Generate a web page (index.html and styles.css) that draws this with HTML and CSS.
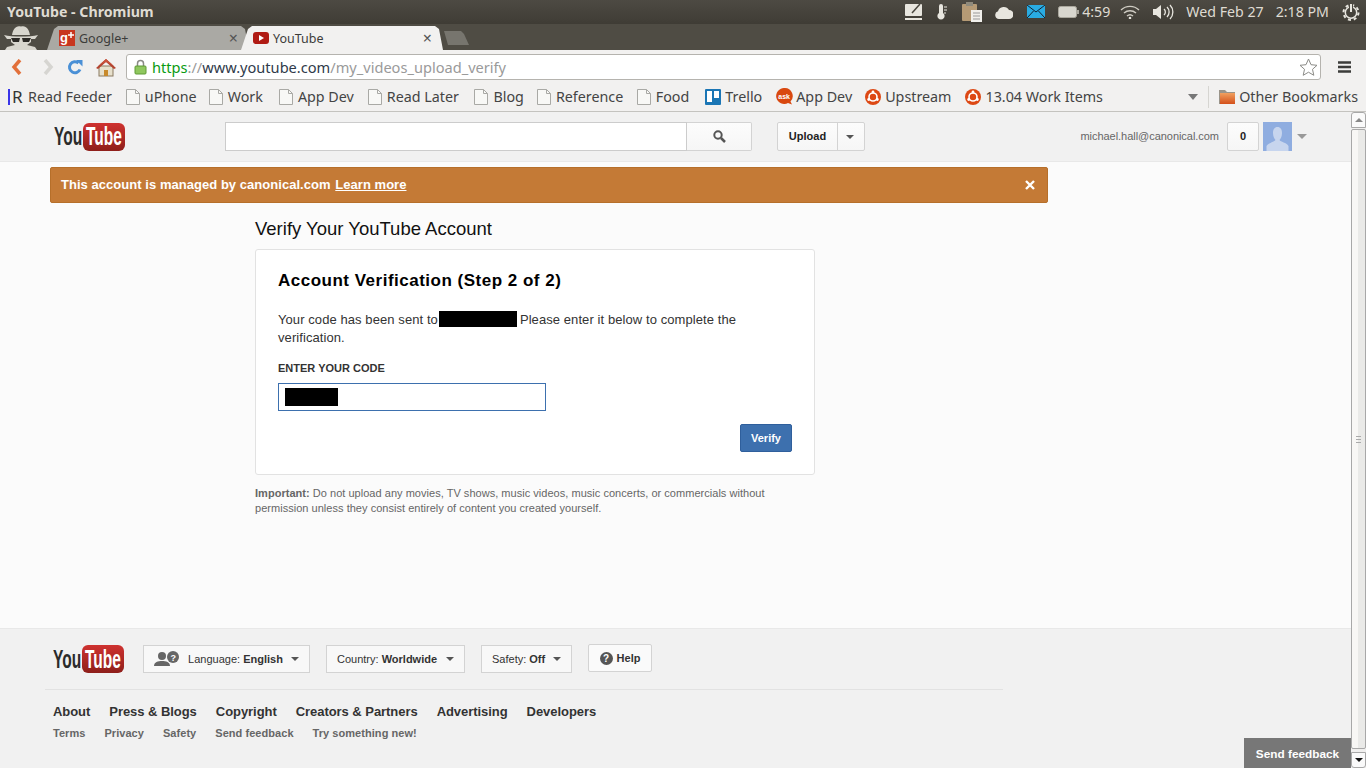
FILE: index.html
```html
<!DOCTYPE html>
<html lang="en">
<head>
    <meta charset="UTF-8">
    <title>YouTube - Chromium</title>
    <link rel="stylesheet" href="styles.css">
</head>
<body>
    <div class="menubar">
        <div class="window-title">YouTube - Chromium</div>
        <div class="indicators">
            <svg class="ind ind-note" width="18" height="18" viewBox="0 0 18 18"><rect x="0" y="1" width="17" height="12" rx="1" fill="#e8e6df"/><rect x="0" y="15" width="17" height="2" fill="#e8e6df"/><path d="M7 10 L15 1" stroke="#4a473f" stroke-width="1.5"/></svg>
            <svg class="ind ind-thermo" width="10" height="18" viewBox="0 0 10 18"><path d="M2 3a2 2 0 0 1 4 0v7a3.6 3.6 0 1 1-4 0z" fill="#e8e6df"/><path d="M7 4h3M7 7h3M7 10h2" stroke="#e8e6df" stroke-width="1"/></svg>
            <svg class="ind ind-clip" width="20" height="22" viewBox="0 0 20 22"><rect x="0" y="3" width="15" height="17" rx="1" fill="#b59a75"/><rect x="4" y="1" width="7" height="4" fill="#8f8a7c"/><rect x="9" y="9" width="11" height="12" fill="#f1f0ec"/><path d="M11 12h7M11 15h7M11 18h7" stroke="#999" stroke-width="1"/></svg>
            <svg class="ind ind-cloud" width="18" height="14" viewBox="0 0 18 14"><path d="M4 14a4 4 0 0 1-1-7.8A6 6 0 0 1 14 5a4.5 4.5 0 0 1 0 9z" fill="#e8e6df"/></svg>
            <svg class="ind ind-mail" width="18" height="13" viewBox="0 0 18 13"><rect width="18" height="13" fill="#29abe2"/><path d="M0 0l9 7 9-7M0 13l6.500-7M18 13l-6.500-7" stroke="#123" stroke-width="1" fill="none"/></svg>
            <svg class="ind ind-batt" width="21" height="12" viewBox="0 0 21 12"><rect x=".5" y=".5" width="18" height="11" rx="2" fill="#d8d6ce" stroke="#aaa79d"/><rect x="19" y="4" width="2" height="4" fill="#aaa79d"/></svg>
            <span class="ind-text ind-time">4:59</span>
            <svg class="ind ind-wifi" width="20" height="14" viewBox="0 0 20 14"><path d="M1 5a13 13 0 0 1 18 0M4 8a9 9 0 0 1 12 0M7 11a4.500 4.500 0 0 1 6 0" stroke="#cfccc3" stroke-width="1.400" fill="none"/><circle cx="10" cy="13" r="1.300" fill="#e8e6df"/></svg>
            <svg class="ind ind-vol" width="21" height="16" viewBox="0 0 21 16"><path d="M0 5h3l5-4v14l-5-4H0z" fill="#e8e6df"/><path d="M11 5a4 4 0 0 1 0 6M14 3a7 7 0 0 1 0 10M17 1a10 10 0 0 1 0 14" stroke="#e8e6df" stroke-width="1.300" fill="none"/></svg>
            <span class="ind-text ind-date">Wed Feb 27</span>
            <span class="ind-text ind-clock">2:18 PM</span>
            <svg class="ind ind-gear" width="18" height="18" viewBox="0 0 18 18"><circle cx="9" cy="9.500" r="7.500" fill="none" stroke="#e8e6df" stroke-width="2" stroke-dasharray="3 2.900"/><circle cx="9" cy="9.500" r="5.700" fill="none" stroke="#e8e6df" stroke-width="1.500"/><path d="M9 1v8" stroke="#4a473f" stroke-width="4"/><path d="M9 1v8" stroke="#e8e6df" stroke-width="2"/></svg>
        </div>
    </div>

    <div class="tabstrip">
        <svg class="incognito" width="36" height="25" viewBox="0 0 36 25"><path d="M9 10C10 4 13 0 18 1.500 23 0 26 4 27 10z" fill="#d8d6ce"/><path d="M1 10c8 2 26 2 34 0l-3 4H4z" fill="#d8d6ce"/><path d="M8 14h20v3l-4 3 8 2 2 3H2l2-3 8-2-4-3z" fill="#d8d6ce"/><path d="M8 13h9l-1 4h-6zM19 13h9l-2 4h-6z" fill="#2c2a26"/></svg>
        <div class="tab tab-off">
            <svg class="favicon" width="16" height="16" viewBox="0 0 16 16"><rect width="16" height="16" fill="#c8361f"/><text x="1" y="12" class="gplus-text">g</text><path d="M9 5h6M12 2v6" stroke="#fff" stroke-width="1.500"/></svg>
            <span class="tab-label">Google+</span>
            <span class="tab-close">×</span>
        </div>
        <div class="tab tab-on">
            <svg class="favicon" width="16" height="12" viewBox="0 0 16 12"><rect width="16" height="12" rx="3" fill="#b01b14"/><path d="M6 3l5 3-5 3z" fill="#fff"/></svg>
            <span class="tab-label">YouTube</span>
            <span class="tab-close">×</span>
        </div>
        <div class="tab-new"></div>
    </div>

    <div class="toolbar">
        <svg class="tool tool-back" width="12" height="16" viewBox="0 0 12 16"><path d="M9 1L3 8l6 7" stroke="#e2703a" stroke-width="3.500" fill="none"/></svg>
        <svg class="tool tool-fwd" width="12" height="16" viewBox="0 0 12 16"><path d="M3 1l6 7-6 7" stroke="#d6d5d1" stroke-width="3.500" fill="none"/></svg>
        <svg class="tool tool-reload" width="16" height="16" viewBox="0 0 16 16"><path d="M13 10.500A5.500 5.500 0 1 1 11.500 4" stroke="#4a90d6" stroke-width="3" fill="none"/><path d="M9 1h6.500v6.500z" fill="#4a90d6"/></svg>
        <svg class="tool tool-home" width="20" height="19" viewBox="0 0 20 19"><rect x="3" y="8" width="14" height="10" fill="#e7e0cc" stroke="#8a7a60"/><path d="M0 10L10 1l10 9-2 1-8-7-8 7z" fill="#b4432f"/><path d="M10 1L3 7l7-3 7 3z" fill="#c9523c"/><rect x="8" y="12" width="4" height="6" fill="#c88a2c"/></svg>
        <div class="omnibox">
            <svg class="lock" width="13" height="16" viewBox="0 0 13 16"><path d="M3.500 7V4.500a3 3 0 0 1 6 0V7" stroke="#8a8a86" stroke-width="1.500" fill="none"/><rect x="1" y="7" width="11" height="8" rx="1" fill="#8fc75e" stroke="#5f9a35"/></svg>
            <div class="url"><span class="url-scheme">https</span><span class="url-sep">://</span><span class="url-host">www.youtube.com</span><span class="url-path">/my_videos_upload_verify</span></div>
            <svg class="star" width="19" height="18" viewBox="0 0 19 18"><path d="M9.500 1l2.500 5.700 6 .6-4.500 4 1.300 6-5.300-3.100-5.300 3.100 1.300-6-4.500-4 6-.6z" fill="#fff" stroke="#8b8b87"/></svg>
        </div>
        <svg class="tool tool-menu" width="13" height="12" viewBox="0 0 13 12"><path d="M0 1.500h13M0 6h13M0 10.500h13" stroke="#3c3c3a" stroke-width="2.400"/></svg>
    </div>

    <div class="bookmarks">
        <div class="bm bm-feeder"><span class="bm-bar"></span><span class="bm-r">R</span><span>Read Feeder</span></div>
        <div class="bm bm-uphone"><svg class="bm-page" width="14" height="16" viewBox="0 0 14 16"><path d="M.5.500h9l4 4v11H.5z" fill="#f8f8f6" stroke="#a9a9a5"/><path d="M9.500.500v4h4" fill="none" stroke="#a9a9a5"/></svg><span>uPhone</span></div>
        <div class="bm bm-work"><svg class="bm-page" width="14" height="16" viewBox="0 0 14 16"><path d="M.5.500h9l4 4v11H.5z" fill="#f8f8f6" stroke="#a9a9a5"/><path d="M9.500.500v4h4" fill="none" stroke="#a9a9a5"/></svg><span>Work</span></div>
        <div class="bm bm-app"><svg class="bm-page" width="14" height="16" viewBox="0 0 14 16"><path d="M.5.500h9l4 4v11H.5z" fill="#f8f8f6" stroke="#a9a9a5"/><path d="M9.500.500v4h4" fill="none" stroke="#a9a9a5"/></svg><span>App Dev</span></div>
        <div class="bm bm-later"><svg class="bm-page" width="14" height="16" viewBox="0 0 14 16"><path d="M.5.500h9l4 4v11H.5z" fill="#f8f8f6" stroke="#a9a9a5"/><path d="M9.500.500v4h4" fill="none" stroke="#a9a9a5"/></svg><span>Read Later</span></div>
        <div class="bm bm-blog"><svg class="bm-page" width="14" height="16" viewBox="0 0 14 16"><path d="M.5.500h9l4 4v11H.5z" fill="#f8f8f6" stroke="#a9a9a5"/><path d="M9.500.500v4h4" fill="none" stroke="#a9a9a5"/></svg><span>Blog</span></div>
        <div class="bm bm-ref"><svg class="bm-page" width="14" height="16" viewBox="0 0 14 16"><path d="M.5.500h9l4 4v11H.5z" fill="#f8f8f6" stroke="#a9a9a5"/><path d="M9.500.500v4h4" fill="none" stroke="#a9a9a5"/></svg><span>Reference</span></div>
        <div class="bm bm-food"><svg class="bm-page" width="14" height="16" viewBox="0 0 14 16"><path d="M.5.500h9l4 4v11H.5z" fill="#f8f8f6" stroke="#a9a9a5"/><path d="M9.500.500v4h4" fill="none" stroke="#a9a9a5"/></svg><span>Food</span></div>
        <div class="bm bm-trello"><svg class="bm-icon" width="16" height="16" viewBox="0 0 16 16"><rect width="16" height="16" rx="1" fill="#1b76b5"/><rect x="2" y="2" width="5" height="11" fill="#fff"/><rect x="9" y="2" width="5" height="7" fill="#fff"/></svg><span>Trello</span></div>
        <div class="bm bm-ask"><svg class="bm-icon bm-icon-ask" width="17" height="17" viewBox="0 0 17 17"><path d="M8.500 0a8 8 0 0 1 6 13.500l1.500 3-4-1.500A8 8 0 1 1 8.500 0z" fill="#d9480f"/><text x="2.300" y="10.500" class="ask-text">ask</text></svg><span>App Dev</span></div>
        <div class="bm bm-up"><svg class="bm-icon" width="16" height="16" viewBox="0 0 16 16"><circle cx="8" cy="8" r="8" fill="#dd4814"/><circle cx="8" cy="8" r="4" fill="none" stroke="#fff" stroke-width="1.600"/><circle cx="8" cy="3" r="1.400" fill="#fff"/><circle cx="3.700" cy="10.500" r="1.400" fill="#fff"/><circle cx="12.300" cy="10.500" r="1.400" fill="#fff"/></svg><span>Upstream</span></div>
        <div class="bm bm-items"><svg class="bm-icon" width="16" height="16" viewBox="0 0 16 16"><circle cx="8" cy="8" r="8" fill="#dd4814"/><circle cx="8" cy="8" r="4" fill="none" stroke="#fff" stroke-width="1.600"/><circle cx="8" cy="3" r="1.400" fill="#fff"/><circle cx="3.700" cy="10.500" r="1.400" fill="#fff"/><circle cx="12.300" cy="10.500" r="1.400" fill="#fff"/></svg><span>13.04 Work Items</span></div>
        <div class="bm-more"></div>
        <div class="bm-divider"></div>
        <div class="bm bm-other"><svg class="bm-icon" width="16" height="15" viewBox="0 0 16 15"><defs><linearGradient id="folder-fill" x1="0" y1="0" x2="0" y2="1"><stop offset="0" stop-color="#f0a060"/><stop offset="1" stop-color="#d4501a"/></linearGradient></defs><path d="M0 1h6l2 2h8v12H0z" fill="#9a948a"/><rect x="1" y="4" width="15" height="11" fill="url(#folder-fill)"/></svg><span>Other Bookmarks</span></div>
    </div>

    <div class="viewport">
        <div class="page">
            <header class="yt-header">
                <div class="yt-logo">
                    <span class="yt-you">You</span><span class="yt-tube"><span class="yt-tube-text">Tube</span></span>
                </div>
                <div class="search">
                    <div class="search-input"></div>
                    <div class="search-btn">
                        <svg width="13" height="13" viewBox="0 0 13 13"><circle cx="5" cy="5" r="3.700" fill="none" stroke="#555" stroke-width="2"/><path d="M8 8l4 4" stroke="#555" stroke-width="2.500"/></svg>
                    </div>
                </div>
                <div class="upload">
                    <div class="upload-main">Upload</div>
                    <div class="upload-arrow"><span class="caret"></span></div>
                </div>
                <div class="account">
                    <span class="email">michael.hall@canonical.com</span>
                    <span class="notif">0</span>
                    <svg class="avatar" width="29" height="29" viewBox="0 0 29 29"><rect width="29" height="29" fill="#8fade0"/><path d="M14.500 5c3 0 4.500 2.500 4.500 6s-1.500 6-2.500 7c1 2 7 2.500 9 6v5H3.500v-5c2-3.500 8-4 9-6-1-1-2.500-3.500-2.500-7s1.500-6 4.500-6z" fill="#c7d5ee"/></svg>
                    <span class="caret caret-grey"></span>
                </div>
            </header>

            <main class="main">
                <div class="banner">
                    <div class="banner-text">This account is managed by canonical.com <a class="banner-link">Learn more</a></div>
                    <svg class="banner-close" width="10" height="10" viewBox="0 0 10 10"><path d="M1 1l8 8M9 1l-8 8" stroke="#fff" stroke-width="2.400"/></svg>
                </div>
                <section class="verify">
                    <h1 class="verify-title">Verify Your YouTube Account</h1>
                    <div class="card">
                        <h2 class="card-title">Account Verification (Step 2 of 2)</h2>
                        <p class="card-text">Your code has been sent to<span class="redact redact-phone"></span>Please enter it below to complete the verification.</p>
                        <div class="code-label">ENTER YOUR CODE</div>
                        <div class="code-input"><span class="redact redact-code"></span></div>
                        <div class="card-actions"><button class="btn-verify">Verify</button></div>
                    </div>
                    <p class="important"><b>Important:</b> Do not upload any movies, TV shows, music videos, music concerts, or commercials without permission unless they consist entirely of content you created yourself.</p>
                </section>
            </main>

            <footer class="yt-footer">
                <div class="foot-top">
                    <div class="yt-logo">
                        <span class="yt-you">You</span><span class="yt-tube"><span class="yt-tube-text">Tube</span></span>
                    </div>
                    <div class="picker picker-lang">
                        <svg class="lang-icon" width="26" height="16" viewBox="0 0 26 16"><circle cx="8" cy="5" r="4" fill="#666"/><path d="M0 15c0-4 4-5 8-5s8 1 8 5z" fill="#666"/><circle cx="19" cy="6" r="6" fill="#666"/><text x="16.500" y="9.500" class="lang-q">?</text></svg>
                        <span>Language: <b>English</b></span><span class="caret"></span>
                    </div>
                    <div class="picker picker-country"><span>Country: <b>Worldwide</b></span><span class="caret"></span></div>
                    <div class="picker picker-safety"><span>Safety: <b>Off</b></span><span class="caret"></span></div>
                    <div class="help-btn">
                        <span class="help-q">?</span><span>Help</span>
                    </div>
                </div>
                <div class="foot-links">
                    <a>About</a><a>Press &amp; Blogs</a><a>Copyright</a><a>Creators &amp; Partners</a><a>Advertising</a><a>Developers</a>
                </div>
                <div class="foot-sub">
                    <a>Terms</a><a>Privacy</a><a>Safety</a><a>Send feedback</a><a>Try something new!</a>
                </div>
            </footer>
            <div class="send-feedback">Send feedback</div>
        </div>
        <div class="scrollbar">
            <div class="sb-btn"><span class="sb-up"></span></div>
            <div class="sb-thumb"><span class="sb-grip"></span></div>
            <div class="sb-btn sb-btn-down"><span class="sb-down"></span></div>
        </div>
    </div>
</body>
</html>
```

FILE: styles.css
```css
* {
    box-sizing: border-box;
}
html, body {
    margin: 0;
    height: 768px;
    overflow: hidden;
}
body {
    font-family: "Liberation Sans", Arial, sans-serif;
    display: flex;
    flex-direction: column;
    background: #f2f1f0;
}

/* desktop panel */
.menubar {
    height: 24px;
    flex: none;
    display: flex;
    align-items: center;
    justify-content: space-between;
    padding-bottom: 1px;
    background: linear-gradient(#4d4a43, #3f3c35);
    font-family: "Noto Sans", sans-serif;
    color: #dfdbd2;
}
.window-title {
    margin-left: 7px;
    font-size: 14.200px;
    font-weight: 700;
}
.indicators {
    display: flex;
    align-items: center;
    padding-right: 6px;
}
.ind {
    flex: none;
}
.ind-text {
    font-size: 14.200px;
}
.ind-thermo { margin-left: 14px; }
.ind-clip { margin-left: 15px; }
.ind-cloud { margin-left: 13px; }
.ind-mail { margin-left: 14px; }
.ind-batt { margin-left: 13px; }
.ind-time { margin-left: 3px; }
.ind-wifi { margin-left: 10px; }
.ind-vol { margin-left: 13px; }
.ind-date { margin-left: 12px; }
.ind-clock { margin-left: 12px; }
.ind-gear { margin-left: 13px; }

/* browser tabs */
.tabstrip {
    height: 26px;
    flex: none;
    display: flex;
    align-items: flex-end;
    background: #4f4c44;
    padding-left: 3px;
}
.incognito {
    flex: none;
}
.tab {
    height: 24px;
    width: 208px;
    flex: none;
    display: flex;
    align-items: center;
    padding: 0 14px 0 15px;
    font-family: "Noto Sans", sans-serif;
    font-size: 12.500px;
    color: #3c3c3a;
    clip-path: polygon(0 100%, 3px 100%, 10px 3px, 14px 0, 197px 0, 201px 3px, 205px 100%, 208px 100%);
}
.tab-off {
    margin-left: 5px;
    background: #aaa9a4;
}
.tab-on {
    margin-left: -14px;
    background: #f2f1f0;
}
.favicon {
    flex: none;
    margin-right: 4px;
}
.gplus-text {
    font-family: "Liberation Sans", sans-serif;
    font-size: 13px;
    font-weight: 700;
    fill: #fff;
}
.tab-label {
    flex: 1;
}
.tab-close {
    font-size: 16px;
    color: #555;
}
.tab-new {
    width: 26px;
    height: 14px;
    margin-left: -3px;
    margin-bottom: 5px;
    background: #77756e;
    clip-path: polygon(1px 0, 18px 0, 21px 3px, 26px 100%, 5px 100%);
}

/* toolbar */
.toolbar {
    height: 34px;
    flex: none;
    display: flex;
    align-items: center;
    background: #f2f1f0;
}
.tool {
    flex: none;
}
.tool-back { margin-left: 11px; }
.tool-fwd { margin-left: 19px; }
.tool-reload { margin-left: 13px; }
.tool-home { margin-left: 13px; }
.omnibox {
    width: 1195px;
    height: 26px;
    margin-left: 10px;
    display: flex;
    align-items: center;
    padding: 0 2px 0 7px;
    background: #fff;
    border: 1px solid #b5b3ae;
    border-radius: 3px;
}
.lock {
    flex: none;
}
.url {
    flex: 1;
    margin-left: 5px;
    font-family: "Noto Sans", sans-serif;
    font-size: 14.600px;
}
.url-scheme { color: #0a9b12; }
.url-sep { color: #9a9a9a; }
.url-host { color: #2f3a4a; }
.url-path { color: #9a9a9a; }
.tool-menu { margin-left: 17px; }

/* bookmarks */
.bookmarks {
    height: 28px;
    flex: none;
    display: flex;
    align-items: center;
    background: #f2f1f0;
    border-bottom: 1px solid #c4c3bf;
    font-family: "Noto Sans", sans-serif;
    font-size: 14.300px;
    color: #444;
    padding: 0 0 2px 8px;
}
.bm {
    display: flex;
    align-items: center;
    flex: none;
}
.bm-bar {
    width: 2px;
    height: 16px;
    background: #3a35e8;
    margin-right: 2px;
}
.bm-r {
    width: 16px;
    font-size: 17px;
    color: #333;
}
.bm-page {
    flex: none;
    margin-right: 5px;
}
.bm-icon {
    flex: none;
    margin-right: 4px;
}
.bm-icon-ask {
    margin-right: 3px;
}
.ask-text {
    font-family: "Liberation Sans", sans-serif;
    font-size: 7px;
    font-weight: 700;
    fill: #fff;
}
.bm-uphone { margin-left: 14px; }
.bm-work { margin-left: 12px; }
.bm-app { margin-left: 16px; }
.bm-later { margin-left: 14px; }
.bm-blog { margin-left: 15.500px; }
.bm-ref { margin-left: 13px; }
.bm-food { margin-left: 13.500px; }
.bm-trello { margin-left: 16px; }
.bm-ask { margin-left: 14px; }
.bm-up { margin-left: 13px; }
.bm-items { margin-left: 14px; }
.bm-more {
    margin-left: auto;
    width: 0;
    height: 0;
    border: 5px solid transparent;
    border-top: 6px solid #777;
    border-bottom: 0;
}
.bm-divider {
    width: 1px;
    height: 22px;
    margin: 0 10px 0 10px;
    background: #d6d5d1;
}
.bm-other {
    margin-right: 8px;
}

/* page + scrollbar */
.viewport {
    flex: 1;
    display: flex;
    min-height: 0;
}
.page {
    flex: 1;
    position: relative;
    display: flex;
    flex-direction: column;
    background: #fbfbfb;
    overflow: hidden;
}
.scrollbar {
    width: 15px;
    flex: none;
    display: flex;
    flex-direction: column;
    background: #f0efee;
}
.sb-btn {
    height: 16px;
    flex: none;
    display: flex;
    align-items: center;
    justify-content: center;
    background: #fafafa;
    border: 1px solid #a8a8a8;
    border-radius: 3px 3px 0 0;
}
.sb-btn-down {
    border-radius: 0 0 3px 3px;
}
.sb-up {
    border: 4px solid transparent;
    border-top: 0;
    border-bottom: 4px solid #888;
}
.sb-down {
    border: 4px solid transparent;
    border-bottom: 0;
    border-top: 4px solid #111;
}
.sb-thumb {
    flex: 1;
    margin: 1px 0 3px;
    display: flex;
    align-items: center;
    justify-content: center;
    background: linear-gradient(90deg, #f8f7f5 50%, #eaeae8 50%);
    border: 1px solid #a8a8a8;
    border-radius: 2px;
}
.sb-grip {
    width: 5px;
    height: 7px;
    border-top: 1px solid #aaa;
    border-bottom: 1px solid #aaa;
    background: linear-gradient(#aaa, #aaa) center / 100% 1px no-repeat;
}

/* youtube header */
.yt-header {
    height: 50px;
    flex: none;
    display: flex;
    align-items: center;
    padding-left: 54px;
    padding-right: 44px;
    background: #f1f1f1;
    border-bottom: 1px solid #e8e8e8;
}
.yt-logo {
    width: 71px;
    height: 30px;
    flex: none;
    display: flex;
    align-items: center;
}
.yt-you {
    width: 28px;
    font-size: 25px;
    font-weight: 700;
    color: #2b2b2b;
    transform: scaleX(0.62);
    transform-origin: left center;
    white-space: nowrap;
}
.yt-tube {
    width: 42px;
    height: 28px;
    margin-left: 1px;
    display: flex;
    align-items: center;
    justify-content: center;
    background: linear-gradient(#cf3230, #8e1f1b);
    border-radius: 6px;
}
.yt-tube-text {
    font-size: 25px;
    font-weight: 700;
    color: #fff;
    transform: scaleX(0.62);
    white-space: nowrap;
}
.search {
    width: 527px;
    height: 29px;
    margin-left: 100px;
    flex: none;
    display: flex;
}
.search-input {
    flex: 1;
    background: #fff;
    border: 1px solid #ccc;
}
.search-btn {
    width: 65px;
    display: flex;
    align-items: center;
    justify-content: center;
    background: linear-gradient(#fcfcfc, #f6f6f6);
    border: 1px solid #d3d3d3;
    border-left: 0;
    border-radius: 0 2px 2px 0;
}
.upload {
    width: 88px;
    height: 29px;
    margin-left: 25px;
    flex: none;
    display: flex;
    background: linear-gradient(#fcfcfc, #f6f6f6);
    border: 1px solid #d3d3d3;
    border-radius: 2px;
}
.upload-main {
    width: 60px;
    display: flex;
    align-items: center;
    justify-content: center;
    padding-bottom: 2px;
    font-size: 11px;
    font-weight: 700;
    color: #222;
    border-right: 1px solid #d3d3d3;
}
.upload-arrow {
    flex: 1;
    display: flex;
    align-items: center;
    justify-content: center;
    padding-right: 2px;
}
.caret {
    display: inline-block;
    width: 0;
    height: 0;
    border: 4px solid transparent;
    border-top: 4px solid #555;
    border-bottom: 0;
}
.caret-grey {
    margin-left: 5px;
    border-width: 5px 5px 0;
    border-top-color: #999;
}
.account {
    margin-left: auto;
    display: flex;
    align-items: center;
}
.email {
    font-size: 11px;
    letter-spacing: -0.040px;
    color: #666;
    padding-bottom: 2px;
}
.notif {
    width: 32px;
    height: 29px;
    margin-left: 8px;
    display: flex;
    align-items: center;
    justify-content: center;
    padding-bottom: 2px;
    font-size: 11px;
    font-weight: 700;
    color: #222;
    background: linear-gradient(#fcfcfc, #f6f6f6);
    border: 1px solid #d3d3d3;
    border-radius: 2px;
}
.avatar {
    margin-left: 4px;
    flex: none;
}

/* main */
.main {
    flex: 1;
    padding: 5px 0 0 50px;
}
.banner {
    width: 998px;
    height: 36px;
    display: flex;
    align-items: center;
    justify-content: space-between;
    padding: 0 12px 2px 10px;
    background: #c47a36;
    border: 1px solid #b66f2a;
    border-radius: 2px;
    color: #fff;
    font-size: 13px;
    letter-spacing: 0.040px;
    font-weight: 700;
}
.banner-link {
    margin-left: 1px;
    text-decoration: underline;
}
.banner-close {
    flex: none;
    margin-top: 2px;
}
.verify {
    width: 560px;
    margin-left: 205px;
}
.verify-title {
    margin: 15px 0 10px;
    font-size: 18.500px;
    line-height: 21px;
    font-weight: 400;
    color: #111;
}
.card {
    height: 226px;
    padding: 21px 22px;
    background: #fff;
    border: 1px solid #e2e2e2;
    border-radius: 3px;
}
.card-title {
    margin: 0;
    font-size: 17px;
    letter-spacing: 0.500px;
    line-height: 20px;
    font-weight: 700;
    color: #000;
}
.card-text {
    margin: 20px 0 0;
    font-size: 13px;
    letter-spacing: 0.080px;
    line-height: 18px;
    color: #333;
}
.redact {
    display: inline-block;
    background: #000;
}
.redact-phone {
    width: 78px;
    height: 16px;
    margin: 0 3px 0 1px;
    vertical-align: -3px;
}
.code-label {
    margin-top: 14px;
    font-size: 11px;
    line-height: 14px;
    font-weight: 700;
    color: #333;
}
.code-input {
    width: 268px;
    height: 28px;
    margin-top: 8px;
    display: flex;
    align-items: center;
    padding-left: 6px;
    background: #fff;
    border: 1px solid #3d70ae;
}
.redact-code {
    width: 53px;
    height: 18px;
}
.card-actions {
    display: flex;
    justify-content: flex-end;
    margin-top: 13px;
}
.btn-verify {
    width: 52px;
    height: 28px;
    padding: 0;
    font-family: inherit;
    font-size: 11px;
    font-weight: 700;
    color: #fff;
    background: #3d70ae;
    border: 1px solid #2f5f9c;
    border-radius: 2px;
}
.important {
    margin: 11px 0 0;
    font-size: 11px;
    letter-spacing: 0.030px;
    line-height: 15px;
    color: #666;
}

/* footer */
.yt-footer {
    height: 140px;
    flex: none;
    padding: 15px 0 0 45px;
    background: #f1f1f1;
    border-top: 1px solid #e8e8e8;
}
.foot-top {
    width: 958px;
    height: 46px;
    display: flex;
    align-items: flex-start;
    padding-left: 8px;
    border-bottom: 1px solid #e2e2e2;
}
.picker {
    height: 28px;
    flex: none;
    display: flex;
    align-items: center;
    justify-content: space-between;
    padding: 0 10px;
    font-size: 11px;
    color: #333;
    background: #f8f8f8;
    border: 1px solid #d3d3d3;
    margin-top: 1px;
}
.foot-top .yt-logo {
    margin-right: 19px;
}
.picker-lang {
    width: 167px;
}
.picker-country {
    width: 139px;
    margin-left: 16px;
}
.picker-safety {
    width: 91px;
    margin-left: 16px;
}
.lang-q {
    font-size: 9px;
    font-weight: 700;
    fill: #fff;
}
.help-btn {
    width: 64px;
    height: 28px;
    margin-left: 16px;
    flex: none;
    display: flex;
    align-items: center;
    justify-content: center;
    font-size: 11px;
    font-weight: 700;
    color: #333;
    background: #fafafa;
    border: 1px solid #d3d3d3;
    border-radius: 2px;
}
.help-q {
    width: 13px;
    height: 13px;
    margin-right: 4px;
    display: flex;
    align-items: center;
    justify-content: center;
    border-radius: 50%;
    background: #555;
    color: #fff;
    font-size: 10px;
}
.foot-links {
    display: flex;
    gap: 19px;
    margin: 14px 0 0 8px;
    font-size: 13px;
    letter-spacing: -0.050px;
    line-height: 16px;
    font-weight: 700;
    color: #333;
}
.foot-sub {
    display: flex;
    gap: 19px;
    margin: 6px 0 0 8px;
    font-size: 11px;
    letter-spacing: 0.050px;
    line-height: 14px;
    font-weight: 700;
    color: #666;
}
.send-feedback {
    position: absolute;
    right: 0;
    bottom: 0;
    width: 107px;
    height: 30px;
    display: flex;
    align-items: center;
    justify-content: center;
    padding-top: 1px;
    background: #777;
    color: #fff;
    font-size: 11.800px;
    font-weight: 700;
}
```
